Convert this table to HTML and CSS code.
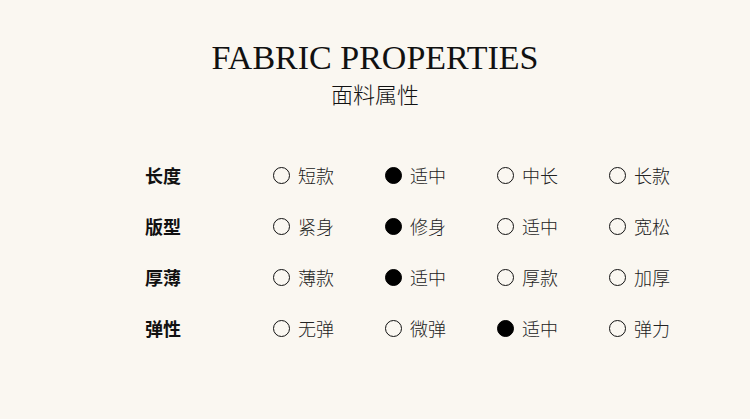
FILE: index.html
```html
<!DOCTYPE html>
<html lang="zh">
<head>
<meta charset="utf-8">
<link rel="stylesheet" href="styles.css">
</head>
<body>
<div class="page">
  <header class="head">
    <h1 class="title">FABRIC PROPERTIES</h1>
    <div class="subtitle">面料属性</div>
  </header>
  <div class="table">
    <div class="row">
      <div class="label">长度</div>
      <div class="opt"><span class="dot"></span><span class="txt">短款</span></div>
      <div class="opt"><span class="dot on"></span><span class="txt">适中</span></div>
      <div class="opt"><span class="dot"></span><span class="txt">中长</span></div>
      <div class="opt"><span class="dot"></span><span class="txt">长款</span></div>
    </div>
    <div class="row">
      <div class="label">版型</div>
      <div class="opt"><span class="dot"></span><span class="txt">紧身</span></div>
      <div class="opt"><span class="dot on"></span><span class="txt">修身</span></div>
      <div class="opt"><span class="dot"></span><span class="txt">适中</span></div>
      <div class="opt"><span class="dot"></span><span class="txt">宽松</span></div>
    </div>
    <div class="row">
      <div class="label">厚薄</div>
      <div class="opt"><span class="dot"></span><span class="txt">薄款</span></div>
      <div class="opt"><span class="dot on"></span><span class="txt">适中</span></div>
      <div class="opt"><span class="dot"></span><span class="txt">厚款</span></div>
      <div class="opt"><span class="dot"></span><span class="txt">加厚</span></div>
    </div>
    <div class="row">
      <div class="label">弹性</div>
      <div class="opt"><span class="dot"></span><span class="txt">无弹</span></div>
      <div class="opt"><span class="dot"></span><span class="txt">微弹</span></div>
      <div class="opt"><span class="dot on"></span><span class="txt">适中</span></div>
      <div class="opt"><span class="dot"></span><span class="txt">弹力</span></div>
    </div>
  </div>
</div>
</body>
</html>
```
FILE: styles.css
```css
html, body {
  margin: 0;
  padding: 0;
  background: #faf7f1;
}
.page {
  width: 750px;
  height: 419px;
  color: #111;
  font-family: "Noto Sans CJK SC", sans-serif;
}
.head {
  padding-top: 38px;
  text-align: center;
}
.title {
  margin: 0;
  font-family: "Liberation Serif", serif;
  font-weight: 400;
  font-size: 34px;
  line-height: 40px;
  letter-spacing: 0;
}
.subtitle {
  margin-top: 0;
  font-size: 22px;
  font-weight: 300;
  line-height: 30px;
}
.table {
  padding-top: 41px;
  padding-left: 145px;
}
.row {
  display: flex;
  align-items: center;
  height: 51px;
}
.label {
  width: 128px;
  font-size: 18px;
  font-weight: 700;
}
.opt {
  width: 112px;
  display: flex;
  align-items: center;
}
.dot {
  flex: none;
  box-sizing: border-box;
  width: 17px;
  height: 17px;
  border: 1.6px solid #111;
  border-radius: 50%;
  margin-top: 2px;
  margin-right: 8px;
}
.dot.on {
  background: #000;
  border-color: #000;
}
.txt {
  font-size: 18px;
  font-weight: 300;
  color: #222;
}
```
